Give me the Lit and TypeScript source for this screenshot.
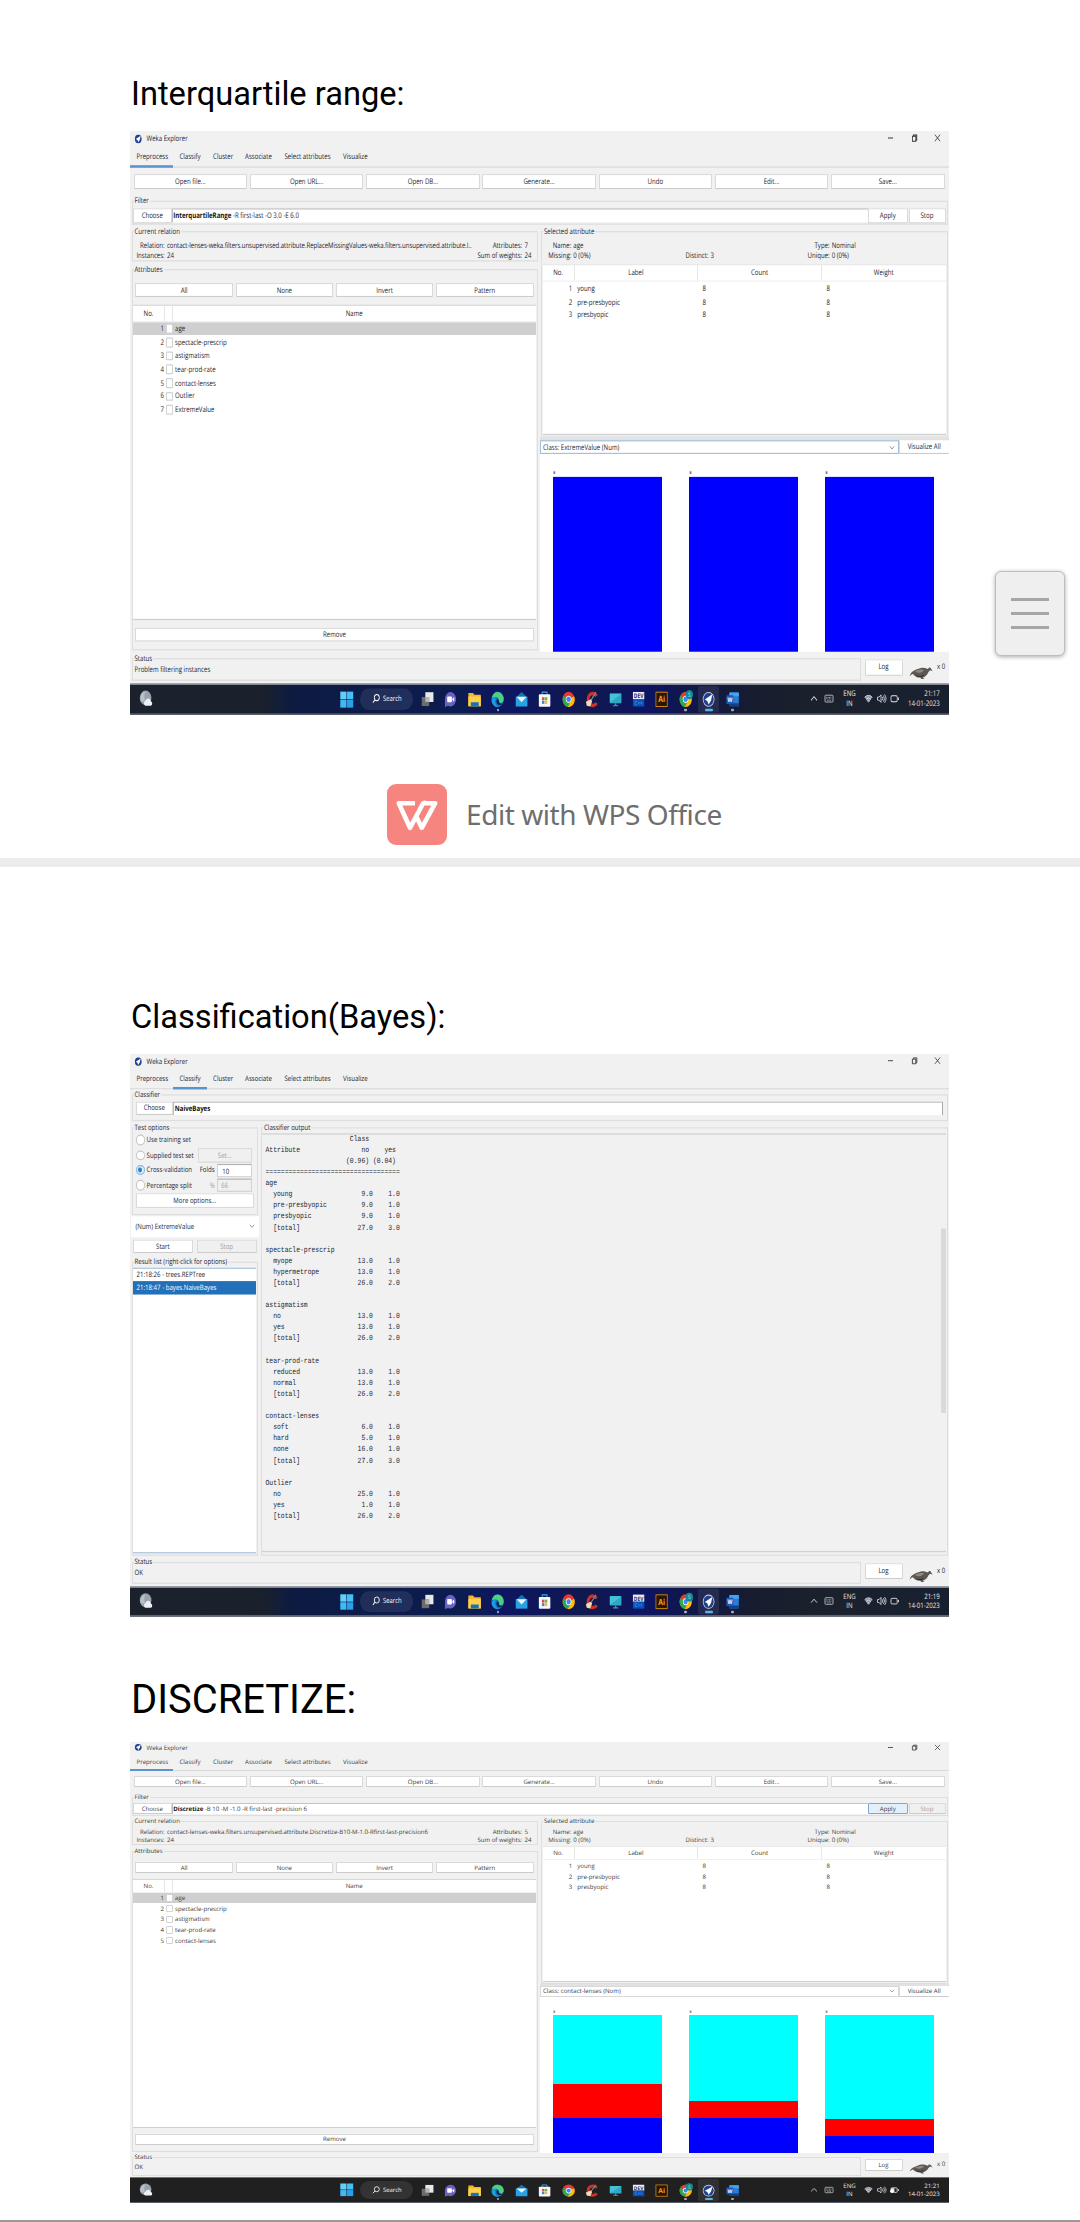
import { LitElement, html, css, svg, nothing } from "lit";
import { customElement, property } from "lit/decorators.js";
import { classMap } from "lit/directives/class-map.js";
import { styleMap } from "lit/directives/style-map.js";

type Bar = { label: string; parts: { color: string; size: number }[] };

interface PreprocessData {
  kind: "preprocess";
  filter: string;
  options: string;
  relation: string;
  count: number;
  attributes: string[];
  classLabel: string;
  bars: Bar[];
  running: boolean;
  status: string;
}

interface ClassifyData {
  kind: "classify";
  status: string;
}

type ScreenData = PreprocessData | ClassifyData;

const BLUE = "#0000ff";
const RED = "#ff0000";
const CYAN = "#00ffff";

const chromeMark = svg`
  <circle cx="7" cy="7" r="6.4" fill="#e33b2e"/>
  <path d="M7 7 1.4 3.9A6.4 6.4 0 0 0 6.2 13.4L10 8.6Z" fill="#2da94f"/>
  <path d="M7 7 12.9 4.4A6.4 6.4 0 0 1 6.2 13.4L9.4 8.4Z" fill="#fdbd00"/>
  <circle cx="7" cy="7" r="3" fill="#fff"/>
  <circle cx="7" cy="7" r="2.3" fill="#4285f4"/>`;

const wekaMark = svg`
  <circle cx="7" cy="7" r="6.2" fill="#dfe6f3"/>
  <circle cx="7" cy="7" r="5.5" fill="#1f3f8f"/>
  <path d="M11 2.8 3 7.2 5.6 8.4 7 11.4 9.6 8Z" fill="#fff"/>`;

const icons = [
  svg`<rect x="4.6" y="1" width="8.6" height="8.2" fill="#e8e8e8"/><path d="M.8 5h7.9v7.6H.8Z" fill="#6c6c6c"/><path d="M4.6 5h4.1v4.2H4.6Z" fill="#b4b4b4"/>`,
  svg`<path d="M7 .9a6 6 0 1 1-2.6 11.5L1 13.3V7A6 6 0 0 1 7 .9Z" fill="#6a62c0"/><rect x="3.4" y="4.6" width="5" height="4.8" rx=".8" fill="#fff"/><path d="m8.8 6.6 2-1.5v3.8l-2-1.5Z" fill="#fff"/>`,
  svg`<path d="M.4 1.6h5l1.3 1.6h6.9v9.6H.4Z" fill="#f6b62c"/><path d="M.4 4.6h13.2v8.2H.4Z" fill="#fcd04d"/><path d="M3 9.4h8.4v3.4H3Z" fill="#1675b8"/>`,
  svg`<circle cx="7" cy="7" r="6.5" fill="#1279c9"/><path d="M1 5.4A6.4 6.4 0 0 1 13.5 7c0 2-1.600 3-3.600 3-1.700 0-2-.8-1.500-1.500C9 7 7.500 5 5.200 5 3 5 1.500 6 1 5.400Z" fill="#4fd07c"/><path d="M5.2 5C2.400 5 .8 7 .6 8.400c1 4 4.400 5.500 7.600 5-3-.6-5-4.200-3-8.400Z" fill="#1b9de2"/><path d="M6.700 6.500c-1.600 1-1.300 4.500 1.500 5.200 1.500.3 3.300-.3 4.300-1.300-2.500.6-4.400-.4-3.800-2.100Z" fill="#0b2357"/>`,
  svg`<path d="M.8 5.400 7 .9l6.200 4.500Z" fill="#1473b5"/><path d="M.8 4.800h12.400v8.200H.8Z" fill="#2aa1e4"/><path d="M1.800 4.800h10.400L7 9.400Z" fill="#e6f6ff"/>`,
  svg`<path d="M4.400 3.200V1h5.200v2.200" fill="none" stroke="#3aa8e8" stroke-width="1"/><rect x=".9" y="2.800" width="12.200" height="10.400" rx="1" fill="#f5f7f8"/><path d="M4.200 5.200h2.600v2.600H4.200Z" fill="#e8503a"/><path d="M7.200 5.200h2.600v2.600H7.200Z" fill="#6fb53f"/><path d="M4.200 8.200h2.600v2.600H4.200Z" fill="#2f8fdc"/><path d="M7.200 8.200h2.600v2.600H7.200Z" fill="#f6b92c"/>`,
  chromeMark,
  svg`<path d="M12.300 4.200A5 5 0 1 0 12.300 10" fill="none" stroke="#cf3028" stroke-width="3"/><path d="M11.600 1 6 8.200" stroke="#7b8790" stroke-width="1.200"/><path d="m1 9 5-2 1.600 1.600-2 4.300-3.800-.6Z" fill="#f0d9bf"/>`,
  svg`<rect x=".8" y="2" width="12.400" height="8.200" rx=".6" fill="#2fa8c8"/><path d="M1 2.200h12L1 9.800Z" fill="#45c2d8"/><path d="M6.200 10.200h1.600v1.700h2v.9H4.200v-.9h2Z" fill="#3e95aa"/>`,
  svg`<rect x="1" y=".8" width="12" height="6.200" fill="#e9effa"/><rect x="1" y="7" width="12" height="6" fill="#0e4fb4"/><text x="7" y="6" font-size="5.200" font-weight="700" text-anchor="middle" fill="#1a2f6d">DEV</text><text x="7" y="12" font-size="5" font-weight="700" text-anchor="middle" fill="#2f8bee">C++</text>`,
  svg`<rect x="1" y="1" width="12" height="12" fill="#2a1500" stroke="#d98a18" stroke-width=".8"/><text x="7" y="9.600" font-size="7.200" font-weight="700" text-anchor="middle" fill="#f2a02c">Ai</text>`,
  svg`${chromeMark}<circle cx="11" cy="3" r="3.900" fill="#128a93"/><text x="11" y="4.900" font-size="5" text-anchor="middle" fill="#bfeef0">S</text>`,
  wekaMark,
  svg`<rect x="3.600" y="1.200" width="10" height="11.600" rx=".8" fill="#2b7cd3"/><path d="M3.600 1.800a.6.6 0 0 1 .6-.6h8.800a.6.6 0 0 1 .6.6V4.400h-10Z" fill="#41a5ee"/><path d="M3.600 10.200h10v2a.6.6 0 0 1-.6.6H3.600Z" fill="#123f8c"/><rect x=".4" y="3.600" width="7.400" height="7.200" rx=".6" fill="#185abd"/><text x="4.100" y="9.200" font-size="5.400" font-weight="700" text-anchor="middle" fill="#fff">W</text>`,
];

/* Windows task bar along the bottom of a captured desktop. */
@customElement("task-bar")
class TaskBar extends LitElement {
  @property() time = "";
  @property({ type: Boolean, reflect: true }) dark = false;

  static styles = css`
    :host {
      display: flex;
      align-items: center;
      box-sizing: border-box;
      height: 25.5px;
      border-top: 1px solid #6d737d;
      border-bottom: 1px solid #5a606b;
      background: linear-gradient(90deg, #1b222d 0%, #1a212c 16%, #0d1b42 20%, #0c1c50 40%, #0d1660 46%, #10184f 56%, #0d1462 63%, #10174a 68%, #171c30 76%, #1b212c 84%, #182030 100%);
      color: #e8e8ea;
      font-size: 6.1px;
    }
    :host([dark]) {
      background: #202020;
    }
    svg {
      display: block;
      flex: none;
      overflow: visible;
      font-family: "Open Sans", sans-serif;
    }
    .weather {
      width: 14px;
      margin-left: 8.5px;
      margin-right: 187.700px;
    }
    .search {
      display: flex;
      align-items: center;
      flex: none;
      box-sizing: border-box;
      width: 53px;
      height: 17.500px;
      margin: 0 2.400px 0 6.800px;
      padding-left: 12px;
      gap: 2.500px;
      border-radius: 9px;
      background: #ffffff16;
      color: #fff;
      font-size: 5.900px;
    }
    .apps {
      display: grid;
      grid-template-columns: repeat(14, 23.450px);
      flex: none;
    }
    .app {
      display: flex;
      flex-direction: column;
      align-items: center;
      justify-content: center;
      box-sizing: border-box;
      height: 23.500px;
      padding-top: 3.200px;
      gap: 1.200px;
    }
    .app i {
      width: 2.600px;
      height: 1.400px;
      border-radius: 1px;
    }
    .app.open i {
      background: #a9adb8;
    }
    .app.active {
      margin: 1px 1.300px;
      height: 21.500px;
      border-radius: 2px;
      background: #ffffff14;
    }
    .app.active i {
      width: 8px;
      background: #58b4e8;
    }
    .tray {
      display: flex;
      align-items: center;
      flex: 1;
      padding-left: 66px;
      padding-right: 9.300px;
    }
    .lang {
      width: 17px;
      margin: 0 3px 0 7.500px;
      text-align: center;
      line-height: 8.300px;
    }
    .keys {
      margin-left: 5.500px;
    }
    .wifi {
      margin-left: 3px;
    }
    .near {
      margin-left: 4px;
    }
    .clock {
      flex: 1;
      text-align: right;
      line-height: 8.300px;
      white-space: nowrap;
    }
  `;

  render() {
    return html`
      <svg class="weather" width="14" height="14" viewBox="0 0 14 14"><circle cx="6.600" cy="6.400" r="5.800" fill="#9aa3ad"/><path d="M6.800 1.400a5.600 5.600 0 0 0-5.300 7c1.500 1.500 4 1 4.300-.5-1-2.500-.8-4.500 1-6.500Z" fill="#b8c0c9"/><path d="M6.400 12.600a2.200 2.200 0 0 1 .3-4.200 2.700 2.700 0 0 1 5.100.6 1.900 1.900 0 0 1 .2 3.600Z" fill="#edf1f5"/></svg>
      <svg width="13.500" height="13.500" viewBox="0 0 14 14"><rect x=".3" y=".5" width="6.400" height="6.300" fill="#5fd0fb"/><rect x="7.300" y=".5" width="6.400" height="6.300" fill="#45bff6"/><rect x=".3" y="7.300" width="6.400" height="6.300" fill="#3fbaf5"/><rect x="7.300" y="7.300" width="6.400" height="6.300" fill="#2a9fec"/></svg>
      <div class="search">
        <svg width="8" height="8" viewBox="0 0 8 8"><circle cx="4.800" cy="3.200" r="2.500" fill="none" stroke="#fff" stroke-width=".8"/><path d="M3 5 .9 7.200" stroke="#fff" stroke-width=".9"/></svg>
        <span>Search</span>
      </div>
      <div class="apps">
        ${icons.map(
          (icon, i) => html`<div class=${classMap({ app: true, open: i === 3 || i === 11 || i === 13, active: i === 12 })}>
            <svg width="13.200" height="13.200" viewBox="0 0 14 14">${icon}</svg><i></i>
          </div>`
        )}
      </div>
      <div class="tray">
        <svg width="8" height="8" viewBox="0 0 8 8"><path d="M1 5.400 4 2.500 7 5.400" fill="none" stroke="#dcdfe4" stroke-width=".8"/></svg>
        <svg class="keys" width="10" height="8" viewBox="0 0 10 8"><rect x="1" y="1.300" width="8" height="5.400" rx=".8" fill="none" stroke="#cfd3da" stroke-width=".7"/><path d="M2.200 3h5.600M2.200 4.200h5.600M3.200 5.500h3.600" stroke="#cfd3da" stroke-width=".6" stroke-dasharray="1 .4"/></svg>
        <div class="lang">ENG<br />IN</div>
        <svg class="wifi" width="9" height="8" viewBox="0 0 9 8"><path d="M.6 3a5.600 5.600 0 0 1 7.800 0L4.500 7.300Z" fill="#8f959f"/><path d="M.6 3a5.600 5.600 0 0 1 7.800 0M2 4.500a3.700 3.700 0 0 1 5 0M3.300 5.900a1.800 1.800 0 0 1 2.400 0" fill="none" stroke="#e4e6ea" stroke-width=".7"/></svg>
        <svg class="near" width="9" height="8" viewBox="0 0 9 8"><path d="M.5 2.800h1.600L4 1v6L2.100 5.200H.5ZM5.200 2.600a2 2 0 0 1 0 2.800M6.400 1.600a3.400 3.400 0 0 1 0 4.800M7.500.7a4.800 4.800 0 0 1 0 6.600" fill="none" stroke="#e4e6ea" stroke-width=".7"/></svg>
        <svg class="near" width="9" height="8" viewBox="0 0 9 8"><rect x="1" y="1.800" width="6.200" height="4.600" rx="1" fill="none" stroke="#e4e6ea" stroke-width=".8"/><path d="M8.400 3.200v1.800" stroke="#e4e6ea" stroke-width=".9"/>${this.dark ? svg`<path d="M1 2.200h3.400v3.800H1Z" fill="#e4e6ea"/><circle cx="1.800" cy="5.200" r="1.700" fill="#fff"/>` : nothing}</svg>
        <div class="clock">${this.time}<br />14-01-2023</div>
      </div>
    `;
  }
}

const TABS = ["Preprocess", "Classify", "Cluster", "Associate", "Select attributes", "Visualize"];

const row = (name: string, a: string, b: string) => name.padEnd(22) + a.padStart(6) + b.padStart(7);
const OUTPUT = [
  " ".repeat(22) + "Class",
  "Attribute".padEnd(25) + "no" + "    yes",
  " ".repeat(21) + "(0.96) (0.04)",
  "=".repeat(35),
  "age",
  row("  young", "9.0", "1.0"),
  row("  pre-presbyopic", "9.0", "1.0"),
  row("  presbyopic", "9.0", "1.0"),
  row("  [total]", "27.0", "3.0"),
  "",
  "spectacle-prescrip",
  row("  myope", "13.0", "1.0"),
  row("  hypermetrope", "13.0", "1.0"),
  row("  [total]", "26.0", "2.0"),
  "",
  "astigmatism",
  row("  no", "13.0", "1.0"),
  row("  yes", "13.0", "1.0"),
  row("  [total]", "26.0", "2.0"),
  "",
  "tear-prod-rate",
  row("  reduced", "13.0", "1.0"),
  row("  normal", "13.0", "1.0"),
  row("  [total]", "26.0", "2.0"),
  "",
  "contact-lenses",
  row("  soft", "6.0", "1.0"),
  row("  hard", "5.0", "1.0"),
  row("  none", "16.0", "1.0"),
  row("  [total]", "27.0", "3.0"),
  "",
  "Outlier",
  row("  no", "25.0", "1.0"),
  row("  yes", "1.0", "1.0"),
  row("  [total]", "26.0", "2.0"),
].join("\n");

/* One captured desktop: the Weka Explorer window over the task bar, stretched vertically by a factor. */
@customElement("weka-screen")
class WekaScreen extends LitElement {
  @property({ attribute: false }) data!: ScreenData;
  @property({ type: Number }) stretch = 1;
  @property() time = "";
  @property({ type: Boolean }) dark = false;

  static styles = css`
    :host {
      display: block;
      width: 819px;
    }
    .frame {
      overflow: hidden;
    }
    .screen {
      display: flex;
      flex-direction: column;
      width: 819px;
      height: 461px;
      transform-origin: 0 0;
      background: #f1f1f1;
      color: #222631;
      font: 6.100px/8px "Open Sans", "Noto Sans", sans-serif;
      text-rendering: geometricPrecision;
      white-space: nowrap;
    }
    .screen.soft {
      color: #3c3c3c;
    }
    .window {
      display: flex;
      flex-direction: column;
      box-sizing: border-box;
      height: 435.500px;
    }
    svg {
      display: block;
      flex: none;
    }
    .title {
      display: flex;
      align-items: center;
      height: 11.500px;
      padding: 0 8px 0 4px;
      gap: 4px;
    }
    .title .grow {
      flex: 1;
    }
    .controls {
      display: flex;
      gap: 16.500px;
    }
    .tabs {
      display: grid;
      grid-template-columns: 42.900px 33.700px 32px 39.400px 58.600px 38px;
      height: 16.500px;
      border-bottom: 1px solid #dadada;
    }
    .tab {
      box-sizing: border-box;
      height: 17.500px;
      padding: 4.200px 0 0 6.500px;
      border-bottom: 2px solid transparent;
    }
    .tab.on {
      border-color: #5b94cc;
    }
    .btn {
      display: flex;
      align-items: center;
      justify-content: center;
      box-sizing: border-box;
      height: 11.300px;
      border: 1px solid #dadada;
      border-bottom-color: #cbcbcb;
      border-radius: 1px;
      background: #fff;
    }
    .btn.off {
      background: #f0f0f0;
      color: #a0a0a0;
    }
    .btn.hot {
      border-color: #7fa9cf;
      background: #e3effa;
    }
    .toolbar {
      display: grid;
      grid-template-columns: repeat(7, 1fr);
      gap: 2.800px;
      margin: 5.300px 4.500px 0 3.700px;
    }
    .group {
      display: flex;
      flex-direction: column;
      box-sizing: border-box;
      border: 1px solid #dedede;
    }
    .legend {
      align-self: flex-start;
      flex: none;
      height: 8px;
      margin: -5px 0 0 1px;
      padding: 0 1px;
      background: #f1f1f1;
    }
    .filter {
      height: 18.700px;
      margin: 9.500px 1.500px 0;
    }
    .filter .line {
      display: grid;
      grid-template-columns: 38.500px 1fr 39.500px 38px;
      margin: 2.200px 1px 0 0.500px;
    }
    .line .btn:last-child {
      margin-left: 1px;
    }
    .field {
      box-sizing: border-box;
      height: 10.600px;
      padding: 1px 0.800px;
      border-top: 1px solid #c4c4c4;
      border-left: 1px solid #bdbdbd;
      background: #fff;
    }
    .field b {
      color: #111;
    }
    .cols {
      display: grid;
      grid-template-columns: 406px 1fr;
      margin: 5.300px 0 0 1.500px;
      height: 332.500px;
    }
    .left {
      display: flex;
      flex-direction: column;
    }
    .relation {
      height: 24px;
    }
    .info {
      display: grid;
      row-gap: 0.700px;
      margin-top: 2.600px;
      column-gap: 2.300px;
    }
    .info.rel {
      grid-template-columns: 32.200px minmax(0, 1fr) 51px 12px;
      letter-spacing: -0.020px;
    }
    .name {
      letter-spacing: -0.010px;
    }
    .name.tight {
      letter-spacing: -0.075px;
    }
    .info.sel {
      grid-template-columns: 29.300px 110px 23.200px 87.200px 30px 1fr;
      column-gap: 2px;
      margin-top: 2.600px;
    }
    .r {
      text-align: right;
    }
    .attrs {
      height: 301px;
      margin-top: 6px;
    }
    .four {
      display: grid;
      grid-template-columns: repeat(4, 1fr);
      gap: 2.700px;
      margin: 7px 3px 5.400px 2.900px;
    }
    .table {
      box-sizing: border-box;
      border-top: 1px solid #d6d6d6;
      border-bottom: 1px solid #cfcfcf;
      background: #fff;
    }
    .attrs .table {
      height: 249px;
      margin: 0 0.500px;
    }
    .thead {
      display: grid;
      height: 12px;
      align-items: center;
      border-bottom: 1px solid #f1f1f1;
    }
    .thead > * {
      display: flex;
      align-items: center;
      justify-content: center;
      height: 100%;
      border-right: 1px solid #e6e6e6;
    }
    .thead > *:last-child {
      border-right: none;
    }
    .attrs .thead {
      grid-template-columns: 32px 7.500px 1fr;
    }
    .arow {
      display: flex;
      align-items: center;
      height: 10.680px;
    }
    .arow.on {
      background: #cfcfcf;
    }
    .arow .n {
      width: 31px;
      text-align: right;
    }
    .box {
      box-sizing: border-box;
      width: 7.600px;
      height: 7.600px;
      margin: 0 1.800px 0 1.700px;
      border: 1px solid #d2d2d2;
      border-radius: 1px;
      background: #fff;
    }
    .remove {
      margin: 6px 3px 0 2.900px;
    }
    .right {
      display: flex;
      flex-direction: column;
      margin-left: 2px;
    }
    .selected {
      height: 163px;
      margin: 0 1.500px;
    }
    .selected .table {
      height: 135.200px;
      margin: 2.200px 1px 0 0.700px;
      border-top-color: #e9e9e9;
    }
    .selected .thead {
      grid-template-columns: 32px 123.500px 123.800px 1fr;
    }
    .srow {
      display: grid;
      grid-template-columns: 29.500px 1fr 119px 119px;
      column-gap: 5px;
      align-items: center;
      height: 10.600px;
    }
    .selected .thead + .srow {
      margin-top: 0.300px;
    }
    .srow > :first-child {
      text-align: right;
    }
    .pick {
      display: grid;
      grid-template-columns: 359px 1fr;
      height: 11px;
      padding-top: 2px;
      background: #e2e2e2;
    }
    .combo {
      display: flex;
      align-items: center;
      justify-content: space-between;
      box-sizing: border-box;
      padding: 0 2.500px;
      border: 1px solid #d8d8d8;
      background: #fff;
    }
    .combo.focus {
      border-color: #a3c1da;
    }
    .pick .btn {
      height: 11px;
      border-width: 0 0 1px 1px;
    }
    .chart {
      display: flex;
      align-items: flex-end;
      gap: 27.300px;
      height: 156.200px;
      padding-left: 13.800px;
      background: #fff;
    }
    .bar {
      display: flex;
      flex-direction: column;
      width: 108.800px;
    }
    .bar .cap {
      height: 4px;
      font-size: 3.500px;
      line-height: 4px;
      color: #000;
    }
    .seg {
      width: 100%;
    }
    .status {
      display: grid;
      grid-template-columns: 729px 38px 30px 1fr;
      align-items: start;
      column-gap: 4px;
      margin: auto 0 1.500px 1.500px;
      height: 18.500px;
    }
    .status .group {
      height: 18.500px;
    }
    .status .msg {
      padding: 1.600px 0 0 2px;
    }
    .status .btn {
      height: 12.500px;
      margin-top: 1.500px;
    }
    .bird {
      margin-top: 5px;
      margin-left: 2px;
    }
    .times {
      margin-top: 3px;
      margin-left: -3.500px;
    }
    .classifier {
      height: 21.600px;
      margin: 4.200px 1.500px 0;
    }
    .classifier .line {
      display: grid;
      grid-template-columns: 37.500px 1fr;
      margin: 1.400px 3.500px 0 3px;
    }
    .classifier .field {
      height: 11.500px;
      border-right: 1px solid #a8a8a8;
    }
    .body {
      display: grid;
      grid-template-columns: 126.500px 1fr;
      column-gap: 3px;
      height: 350.500px;
      margin: 5.400px 1.500px 0;
    }
    .side {
      display: flex;
      flex-direction: column;
    }
    .options {
      height: 71.600px;
    }
    .opts {
      display: grid;
      grid-template-rows: 12.500px 12.300px 12.300px 12.200px;
      padding-top: 0.300px;
    }
    .opt {
      display: grid;
      grid-template-columns: 8px 48px 17.500px 34.500px;
      column-gap: 2.600px;
      align-items: center;
      height: 12px;
      padding: 0 3px 0 3.500px;
    }
    .radio {
      display: flex;
      align-items: center;
      justify-content: center;
      box-sizing: border-box;
      width: 8.600px;
      height: 8.200px;
      border: 1px solid #c6c6c6;
      border-radius: 50%;
      background: #fff;
    }
    .radio.on {
      border-color: #86b6e0;
      background: #dcecfa;
    }
    .radio.on::after {
      content: "";
      width: 4px;
      height: 4px;
      border-radius: 50%;
      background: #2f7fd0;
    }
    .wide {
      grid-column: 3 / 5;
      margin-left: 0.500px;
    }
    .val {
      box-sizing: border-box;
      height: 10.800px;
      padding: 0.700px 4px;
      border: 1px solid #d3d3d3;
      border-top-color: #b4b4b4;
      background: #fff;
    }
    .muted {
      color: #a0a0a0;
    }
    .val.muted {
      padding-left: 3px;
      background: #f0f0f0;
    }
    .more {
      margin: 0.500px 3px 0;
    }
    .target {
      height: 16.300px;
      margin: 1.500px -1px 0;
      border: none;
      padding: 0 4.500px 0 5px;
    }
    .pair {
      display: grid;
      grid-template-columns: 1fr 1fr;
      gap: 3.500px;
      margin: 2.500px 1.200px 0;
    }
    .results {
      flex: 1;
      margin-top: 6.900px;
    }
    .list {
      flex: 1;
      margin: 1px 0.800px 0.800px;
      border-top: 1px solid #a9c2da;
      border-bottom: 1px solid #a8c1da;
      background: #fff;
    }
    .item {
      height: 9.900px;
      padding: 0 0 0 3.200px;
      box-sizing: border-box;
      line-height: 9.400px;
    }
    .item.on {
      height: 11px;
      line-height: 10.600px;
      background: #2270b9;
      color: #fff;
    }
    .output {
      flex: 1;
    }
    .console {
      display: flex;
      justify-content: space-between;
      flex: 1;
      margin: 1px 1px 1.200px 0;
      border-top: 1px solid #d0d0d0;
      border-bottom: 1px solid #d0d0d0;
    }
    .console pre {
      margin: -1.400px 0 0 3.500px;
      font: 6.400px/9.090px "Liberation Mono", monospace;
    }
    .thumb {
      width: 5px;
      height: 151px;
      margin-top: 77px;
      background: #dadada;
    }
  `;

  private bird() {
    return html`<svg class="bird" width="24" height="12" viewBox="0 0 24 12">
      <path d="M.6 9.600C1.600 6 4.500 5.200 7.800 3.900c4-1.500 7.500-1.800 9.600-.6l1.600.4c.5-1.400 2.200-1.800 3-.5l1.500 2.200-2.400-.8-1.600 1.400c-1.500 2.800-3.500 3.800-5.700 4.400l1.800.9-3.300.2-1-1.100c-3.800.1-5.800-1.200-7.200-2.900C2.800 7.600 1.800 8.400.6 9.600Z" fill="#5c5751"/>
      <path d="M6 5.600c3-1.400 6.500-1.900 9-1.200-2 2-5 3.300-9 1.200Z" fill="#8f8982"/>
      <path d="M7 8.300c2.500 1.200 6 1 8-.6-1 2.400-5.500 3.100-8 .6Z" fill="#2f2b27"/>
    </svg>`;
  }

  private chevron() {
    return html`<svg width="6" height="4" viewBox="0 0 6 4"><path d="m.8.800 2.200 2.200L5.200.8" fill="none" stroke="#808080" stroke-width=".7"/></svg>`;
  }

  private preprocess(d: PreprocessData) {
    return html`
      <div class="toolbar">
        ${["Open file...", "Open URL...", "Open DB...", "Generate...", "Undo", "Edit...", "Save..."].map((t) => html`<div class="btn">${t}</div>`)}
      </div>
      <div class="group filter">
        <div class="legend">Filter</div>
        <div class="line">
          <div class="btn">Choose</div>
          <div class="field"><b>${d.filter}</b> ${d.options}</div>
          <div class=${classMap({ btn: true, hot: d.running })}>Apply</div>
          <div class=${classMap({ btn: true, off: d.running })}>Stop</div>
        </div>
      </div>
      <div class="cols">
        <div class="left">
          <div class="group relation">
            <div class="legend">Current relation</div>
            <div class="info rel">
              <span class="r">Relation:</span><span class=${classMap({ name: true, tight: !d.running })}>${d.relation}</span><span class="r">Attributes:</span><span>${d.count}</span>
              <span class="r">Instances:</span><span>24</span><span class="r">Sum of weights:</span><span>24</span>
            </div>
          </div>
          <div class="group attrs">
            <div class="legend">Attributes</div>
            <div class="four">${["All", "None", "Invert", "Pattern"].map((t) => html`<div class="btn">${t}</div>`)}</div>
            <div class="table">
              <div class="thead"><span>No.</span><span></span><span>Name</span></div>
              ${d.attributes.map(
                (a, i) => html`<div class=${classMap({ arow: true, on: i === 0 })}>
                  <span class="n">${i + 1}</span><i class="box"></i><span>${a}</span>
                </div>`
              )}
            </div>
            <div class="btn remove">Remove</div>
          </div>
        </div>
        <div class="right">
          <div class="group selected">
            <div class="legend">Selected attribute</div>
            <div class="info sel">
              <span class="r">Name:</span><span>age</span><span></span><span></span><span class="r">Type:</span><span>Nominal</span>
              <span class="r">Missing:</span><span>0 (0%)</span><span class="r">Distinct:</span><span>3</span><span class="r">Unique:</span><span>0 (0%)</span>
            </div>
            <div class="table">
              <div class="thead"><span>No.</span><span>Label</span><span>Count</span><span>Weight</span></div>
              ${["young", "pre-presbyopic", "presbyopic"].map(
                (a, i) => html`<div class="srow"><span>${i + 1}</span><span>${a}</span><span>8</span><span>8</span></div>`
              )}
            </div>
          </div>
          <div class="pick">
            <div class=${classMap({ combo: true, focus: !d.running })}><span>${d.classLabel}</span>${this.chevron()}</div>
            <div class="btn">Visualize All</div>
          </div>
          <div class="chart">
            ${d.bars.map(
              (b) => html`<div class="bar">
                <span class="cap">${b.label}</span>
                ${b.parts.map((p) => html`<div class="seg" style=${styleMap({ height: `${p.size}px`, background: p.color })}></div>`)}
              </div>`
            )}
          </div>
        </div>
      </div>
    `;
  }

  private classify() {
    return html`
      <div class="group classifier">
        <div class="legend">Classifier</div>
        <div class="line"><div class="btn">Choose</div><div class="field"><b>NaiveBayes</b></div></div>
      </div>
      <div class="body">
        <div class="side">
          <div class="group options">
            <div class="legend">Test options</div>
            <div class="opts">
              <div class="opt"><i class="radio"></i><span>Use training set</span></div>
              <div class="opt"><i class="radio"></i><span>Supplied test set</span><div class="btn off wide">Set...</div></div>
              <div class="opt"><i class="radio on"></i><span>Cross-validation</span><span class="r">Folds</span><div class="val">10</div></div>
              <div class="opt"><i class="radio"></i><span>Percentage split</span><span class="r muted">%</span><div class="val muted">66</div></div>
            </div>
            <div class="btn more">More options...</div>
          </div>
          <div class="combo target"><span>(Num) ExtremeValue</span>${this.chevron()}</div>
          <div class="pair"><div class="btn">Start</div><div class="btn off">Stop</div></div>
          <div class="group results">
            <div class="legend">Result list (right-click for options)</div>
            <div class="list">
              <div class="item">21:18:26 - trees.REPTree</div>
              <div class="item on">21:18:47 - bayes.NaiveBayes</div>
            </div>
          </div>
        </div>
        <div class="group output">
          <div class="legend">Classifier output</div>
          <div class="console"><pre>${OUTPUT}</pre><div class="thumb"></div></div>
        </div>
      </div>
    `;
  }

  render() {
    const d = this.data;
    const active = d.kind === "preprocess" ? 0 : 1;
    return html`
      <div class="frame" style=${styleMap({ height: `${461 * this.stretch}px` })}>
        <div class=${classMap({ screen: true, soft: this.dark })} style=${styleMap({ transform: `scaleY(${this.stretch})` })}>
          <div class="window">
            <div class="title">
              <svg width="8.500" height="8.500" viewBox="0 0 14 14">${wekaMark}</svg>
              <span class="grow">Weka Explorer</span>
              <div class="controls">
                <svg width="7" height="7" viewBox="0 0 7 7"><path d="M1 3.500h5" stroke="#333" stroke-width=".8"/></svg>
                <svg width="7" height="7" viewBox="0 0 7 7"><path d="M1.400 2.200h3.400v3.800H1.400Z M2.400 2V1.200h3.400v4H5" fill="none" stroke="#333" stroke-width=".8"/></svg>
                <svg width="7" height="7" viewBox="0 0 7 7"><path d="m.9.900 5.200 5.200M6.100.9.900 6.100" stroke="#333" stroke-width=".7"/></svg>
              </div>
            </div>
            <div class="tabs">${TABS.map((t, i) => html`<div class=${classMap({ tab: true, on: i === active })}>${t}</div>`)}</div>
            ${d.kind === "preprocess" ? this.preprocess(d) : this.classify()}
            <div class="status">
              <div class="group"><div class="legend">Status</div><div class="msg">${d.status}</div></div>
              <div class="btn">Log</div>
              ${this.bird()}
              <span class="times">x 0</span>
            </div>
          </div>
          <task-bar .time=${this.time} ?dark=${this.dark}></task-bar>
        </div>
      </div>
    `;
  }
}

const ATTRIBUTES = ["age", "spectacle-prescrip", "astigmatism", "tear-prod-rate", "contact-lenses"];

const interquartile: PreprocessData = {
  kind: "preprocess",
  filter: "InterquartileRange",
  options: "-R first-last -O 3.0 -E 6.0",
  relation: "contact-lenses-weka.filters.unsupervised.attribute.ReplaceMissingValues-weka.filters.unsupervised.attribute.I..",
  count: 7,
  attributes: [...ATTRIBUTES, "Outlier", "ExtremeValue"],
  classLabel: "Class: ExtremeValue (Num)",
  bars: ["8", "8", "8"].map((label) => ({ label, parts: [{ color: BLUE, size: 138 }] })),
  running: false,
  status: "Problem filtering instances",
};

const discretize: PreprocessData = {
  kind: "preprocess",
  filter: "Discretize",
  options: "-B 10 -M -1.0 -R first-last -precision 6",
  relation: "contact-lenses-weka.filters.unsupervised.attribute.Discretize-B10-M-1.0-Rfirst-last-precision6",
  count: 5,
  attributes: ATTRIBUTES,
  classLabel: "Class: contact-lenses (Nom)",
  bars: [
    { label: "8", parts: [{ color: CYAN, size: 69 }, { color: RED, size: 34.5 }, { color: BLUE, size: 34.8 }] },
    { label: "8", parts: [{ color: CYAN, size: 86 }, { color: RED, size: 17 }, { color: BLUE, size: 34.8 }] },
    { label: "8", parts: [{ color: CYAN, size: 103.5 }, { color: RED, size: 17 }, { color: BLUE, size: 17.3 }] },
  ],
  running: true,
  status: "OK",
};

const classification: ClassifyData = { kind: "classify", status: "OK" };

@customElement("app-root")
class AppRoot extends LitElement {
  static styles = css`
    :host {
      display: block;
      position: relative;
      width: 1080px;
      height: 2222px;
      overflow: hidden;
      background: #fff;
      font-family: Roboto, sans-serif;
      color: #000;
    }
    .page {
      box-sizing: border-box;
      padding-left: 130px;
    }
    .first {
      height: 857.500px;
      padding-top: 72px;
    }
    h2 {
      height: 44px;
      margin: 0 0 15px 1px;
      font-weight: 400;
      font-size: 32.650px;
      line-height: 44px;
      white-space: nowrap;
    }
    .mark {
      display: flex;
      align-items: center;
      gap: 19px;
      margin: 68.500px 0 0 257px;
      color: #6e6e6e;
      font: 28px/58px "Noto Sans", sans-serif;
      letter-spacing: -0.440px;
      white-space: nowrap;
    }
    .mark span {
      margin-top: -1px;
    }
    .mark svg {
      display: block;
    }
    .rule {
      height: 9px;
      background: #ececec;
    }
    .second {
      height: 1355.500px;
      padding-top: 128.500px;
      border-bottom: 2px solid #999;
    }
    .second .big {
      height: 50px;
      margin: 58px 0 17px 1px;
      font-size: 39.900px;
      line-height: 50px;
    }
    .menu {
      position: absolute;
      left: 995px;
      top: 571px;
      display: flex;
      flex-direction: column;
      align-items: center;
      justify-content: center;
      gap: 11px;
      box-sizing: border-box;
      width: 70px;
      height: 85px;
      border: 1px solid #bdbdbd;
      border-radius: 6px;
      background: #efefef;
      box-shadow: 0 1px 4px #0005;
    }
    .menu i {
      width: 38px;
      height: 3px;
      background: #a6a6a6;
    }
  `;

  render() {
    return html`
      <section class="page first">
        <h2>Interquartile range:</h2>
        <weka-screen .data=${interquartile} .stretch=${1.267} time="21:17"></weka-screen>
        <div class="mark">
          <svg width="60" height="61" viewBox="0 0 60 61">
            <rect width="60" height="61" rx="9" fill="#f68580"/>
            <path d="M28 19.200H11.800L23 43.800 36 19.500 39 18.500M28.500 31 34.800 43.800 48.200 19.200H37" fill="none" stroke="#fff" stroke-width="4.600" stroke-linejoin="round"/>
          </svg>
          <span>Edit with WPS Office</span>
        </div>
      </section>
      <div class="rule"></div>
      <section class="page second">
        <h2>Classification(Bayes):</h2>
        <weka-screen .data=${classification} .stretch=${1.221} time="21:19"></weka-screen>
        <h2 class="big">DISCRETIZE:</h2>
        <weka-screen .data=${discretize} time="21:21" dark></weka-screen>
      </section>
      <div class="menu"><i></i><i></i><i></i></div>
    `;
  }
}
